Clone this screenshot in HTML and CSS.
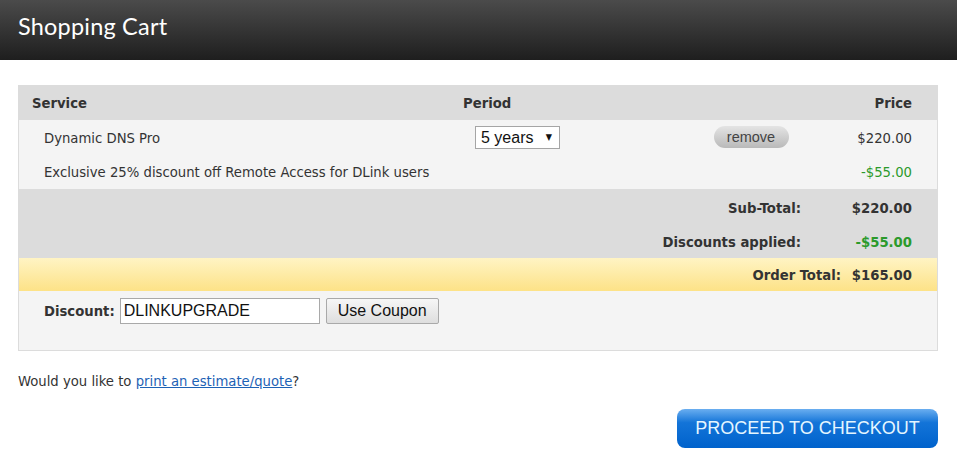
FILE: index.html
```html
<!DOCTYPE html>
<html lang="en">
<head>
    <meta charset="UTF-8">
    <meta name="viewport" content="width=device-width, initial-scale=1.0">
    <title>Shopping Cart</title>
    <link rel="stylesheet" href="styles.css">
</head>
<body>
    <div class="page-header">
        <h1>Shopping Cart</h1>
    </div>

    <div class="content">
        <!-- Cart table -->
        <div class="cart">
            <div class="cart-row cart-head">
                <div class="col-service">Service</div>
                <div class="col-period">Period</div>
                <div class="col-action"></div>
                <div class="col-price">Price</div>
            </div>

            <div class="cart-row cart-item">
                <div class="col-service">Dynamic DNS Pro</div>
                <div class="col-period">
                    <span class="select-wrap">
                        <select class="period-select">
                            <option>1 year</option>
                            <option>2 years</option>
                            <option selected>5 years</option>
                        </select>
                    </span>
                </div>
                <div class="col-action"><button class="remove-button">remove</button></div>
                <div class="col-price">$220.00</div>
            </div>

            <div class="cart-row cart-item">
                <div class="col-service">Exclusive 25% discount off Remote Access for DLink users</div>
                <div class="col-period"></div>
                <div class="col-action"></div>
                <div class="col-price discount">-$55.00</div>
            </div>

            <!-- Totals -->
            <div class="totals">
                <div class="total-row">
                    <div class="total-label">Sub-Total:</div>
                    <div class="total-value">$220.00</div>
                </div>
                <div class="total-row">
                    <div class="total-label">Discounts applied:</div>
                    <div class="total-value discount">-$55.00</div>
                </div>
            </div>
            <div class="total-row order-total">
                <div class="total-label">Order Total:</div>
                <div class="total-value">$165.00</div>
            </div>

            <!-- Coupon -->
            <form class="coupon">
                <label for="couponCode">Discount:</label>
                <input type="text" id="couponCode" value="DLINKUPGRADE">
                <button type="submit" class="coupon-button">Use Coupon</button>
            </form>
        </div>

        <p class="estimate">Would you like to <a href="#">print an estimate/quote</a>?</p>

        <div class="checkout">
            <button class="checkout-button">PROCEED TO CHECKOUT</button>
        </div>
    </div>
</body>
</html>
```

FILE: styles.css
```css
body {
    margin: 0;
    font-family: "DejaVu Sans Condensed", "DejaVu Sans", sans-serif;
    font-size: 14.7px;
    color: #333;
    background-color: white;
}

.page-header {
    height: 60px;
    background: linear-gradient(to bottom, #4b4b4b, #1e1e1e);
    display: flex;
    align-items: center;
    padding: 0 18px;
}

.page-header h1 {
    margin: 0;
    color: white;
    font-family: Lato, "Open Sans", sans-serif;
    font-weight: normal;
    font-size: 23.5px;
    letter-spacing: 0.2px;
    padding-bottom: 9px;
}

.content {
    padding: 25px 19px 0 18px;
}

/* Cart table */
.cart {
    border: 1px solid #dcdcdc;
    border-top: none;
}

.cart-row {
    display: grid;
    grid-template-columns: 432px 229px 140px 1fr;
    align-items: center;
}

.cart-head {
    height: 35px;
    background-color: #dcdcdc;
    font-weight: bold;
}

.cart-head .col-service {
    padding-left: 13px;
}

.cart-head .col-period {
    padding-left: 12px;
}

.cart-item {
    height: 34.5px;
    background-color: #f4f4f4;
}

.cart-item .col-service {
    padding-left: 25px;
    white-space: nowrap;
}

.cart-item .col-period {
    padding-left: 24px;
}

.col-action {
    text-align: center;
}

.col-price {
    text-align: right;
    padding-right: 25px;
}

.discount {
    color: #2b9a2b;
}

.select-wrap {
    position: relative;
    display: inline-block;
}

.select-wrap::after {
    content: "\25BC";
    position: absolute;
    right: 8px;
    top: 6px;
    font-size: 9px;
    color: #111;
    pointer-events: none;
}

.period-select {
    appearance: none;
    -webkit-appearance: none;
    width: 85px;
    height: 23px;
    padding: 0 0 0 5px;
    border: 1px solid #a5a5a5;
    border-radius: 0;
    background-color: white;
    font-family: "Liberation Sans", Arial, sans-serif;
    font-size: 16px;
    color: #111;
}

.remove-button {
    width: 75px;
    height: 22px;
    border: none;
    border-radius: 11px;
    background: linear-gradient(to bottom, #e4e4e4, #b9b9b9);
    font-family: "Liberation Sans", Arial, sans-serif;
    font-size: 14.5px;
    color: #444;
    padding: 0;
    margin-left: 2px;
}

/* Totals */
.totals {
    background-color: #dcdcdc;
    padding-top: 1px;
}

.total-row {
    display: grid;
    grid-template-columns: 1fr 117px;
    align-items: center;
    height: 34px;
    font-weight: bold;
}

.total-label {
    text-align: right;
    padding-right: 19px;
}

.total-value {
    text-align: right;
    padding-right: 25px;
}

.order-total {
    height: 33px;
    grid-template-columns: 1fr 87px;
    background: linear-gradient(to bottom, #fff4c4, #fde287);
}

.order-total .total-label {
    padding-right: 9px;
}

/* Coupon */
.coupon {
    display: flex;
    align-items: flex-start;
    height: 52px;
    padding: 7px 0 0 25px;
    background-color: #f4f4f4;
}

.coupon label {
    font-weight: bold;
    line-height: 26px;
    margin-right: 5px;
}

.coupon input {
    width: 200px;
    height: 26px;
    box-sizing: border-box;
    border: 1px solid #a9a9a9;
    padding: 0 3px;
    font-family: "Liberation Sans", Arial, sans-serif;
    font-size: 16px;
    color: #111;
    margin: 0;
}

.coupon-button {
    height: 26px;
    margin-left: 6px;
    padding: 0 11px;
    border: 1px solid #a9a9a9;
    border-radius: 2px;
    background: linear-gradient(to bottom, #f6f6f6, #dedede);
    font-family: "Liberation Sans", Arial, sans-serif;
    font-size: 16px;
    color: #111;
}

.estimate {
    margin: 21px 0 0 0;
    line-height: 18px;
}

.estimate a {
    color: #1d62b5;
}

.checkout {
    display: flex;
    justify-content: flex-end;
    margin-top: 19px;
}

.checkout-button {
    width: 261px;
    height: 39px;
    border: none;
    border-radius: 8px;
    background: linear-gradient(to bottom, #6aaef0 0%, #1374d8 35%, #0062cc 100%);
    color: #e4f6ff;
    font-family: "Liberation Sans", Arial, sans-serif;
    font-size: 18px;
    padding: 0;
}
```
